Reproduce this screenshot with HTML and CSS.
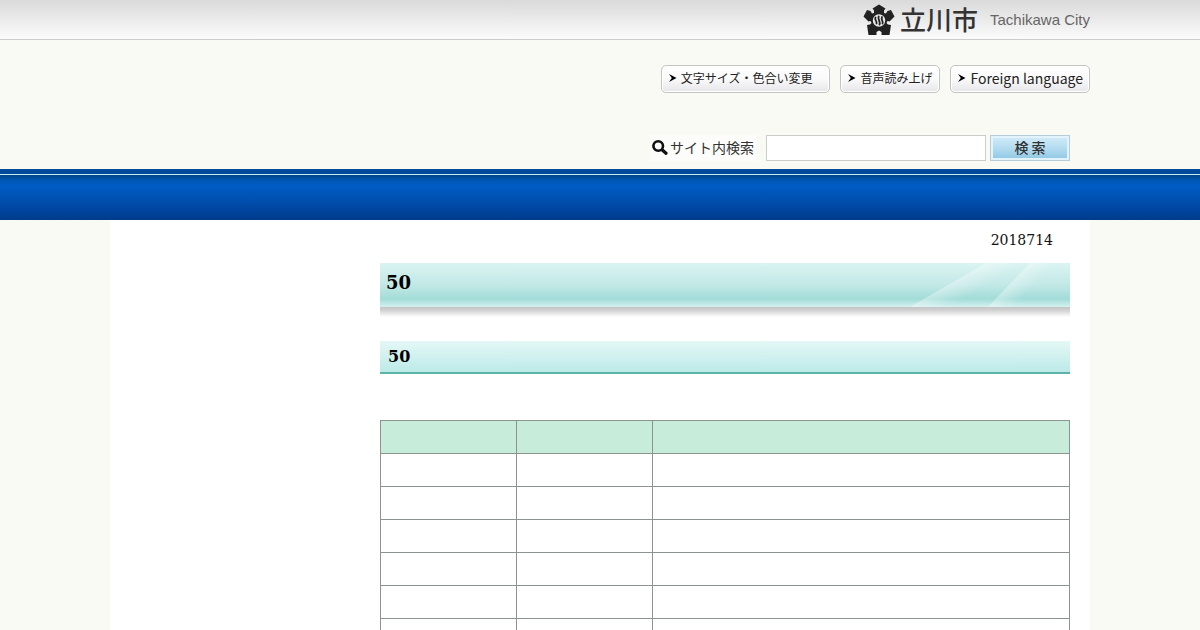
FILE: index.html
```
<!DOCTYPE html>
<html lang="ja">
<head>
    <meta charset="UTF-8">
    <meta name="viewport" content="width=device-width, initial-scale=1.0">
    <title>立川市</title>
    <link rel="stylesheet" href="styles.css">
</head>
<body>
    <header>
        <div class="top-bar">
            <div class="wrap">
                <a class="logo" href="#">
                    <svg class="logo-mark" viewBox="0 0 32 32" aria-hidden="true">
                        <path fill="#222" d="M16 0.5 L22.5 4.5 L21 6.5 L21 9 L23 9.5 L24.5 7 L28 6 L31.5 12.5 L26.5 17.5 L24.5 17 L23.5 19 L25 20.5 L28 21 L26.5 31 L18.5 31 L18.5 28 L16 26.5 L13.5 28 L13.5 31 L5.5 31 L4 21 L7 20.5 L8.5 19 L7.5 17 L5.5 17.5 L0.5 12.5 L4 6 L7.5 7 L9 9.5 L11 9 L11 6.5 L9.5 4.5 Z"/>
                        <circle cx="16" cy="16.5" r="6.2" fill="#e8e8e8"/>
                        <g fill="none" stroke="#222" stroke-width="1.8" stroke-linecap="round">
                            <path d="M12.5 13.5 C11 16 14.5 17 13.5 19.5"/>
                            <path d="M15.7 12.5 C14.2 15.5 18 17.5 16.5 20.5"/>
                            <path d="M19 13 C17.5 16 20.8 17 19.5 19.5"/>
                        </g>
                    </svg>
                    <span class="logo-name">立川市</span>
                    <span class="logo-roman">Tachikawa City</span>
                </a>
            </div>
        </div>
        <div class="wrap">
            <div class="tools">
                <a class="tool tool-view" href="#"><svg class="arrow" viewBox="0 0 8 8" aria-hidden="true"><path d="M0 0 L7.5 4 L0 8 L2.8 4 Z"/></svg>文字サイズ・色合い変更</a>
                <a class="tool" href="#"><svg class="arrow" viewBox="0 0 8 8" aria-hidden="true"><path d="M0 0 L7.5 4 L0 8 L2.8 4 Z"/></svg>音声読み上げ</a>
                <a class="tool tool-lang" href="#"><svg class="arrow" viewBox="0 0 8 8" aria-hidden="true"><path d="M0 0 L7.5 4 L0 8 L2.8 4 Z"/></svg>Foreign language</a>
            </div>
            <form class="search">
                <label for="keyword">
                    <svg class="glass" viewBox="0 0 16 16" aria-hidden="true">
                        <circle cx="6.2" cy="7" r="4.8" fill="none" stroke="#111" stroke-width="2.6"/>
                        <path d="M10.3 11 L14 14.3" stroke="#111" stroke-width="3.2" stroke-linecap="round"/>
                    </svg>
                    サイト内検索
                </label>
                <input type="text" id="keyword">
                <button type="button">検 索</button>
            </form>
        </div>
    </header>
    <nav class="global-nav"></nav>
    <div class="page">
        <main>
            <p class="date">2018714</p>
            <h1>
                <span>50</span>
                <svg class="shine" viewBox="0 0 160 44" aria-hidden="true">
                    <defs>
                        <linearGradient id="ray1" gradientUnits="userSpaceOnUse" x1="38" y1="22" x2="48" y2="39">
                            <stop offset="0" stop-color="#fff" stop-opacity="0.35"/>
                            <stop offset="1" stop-color="#fff" stop-opacity="0"/>
                        </linearGradient>
                        <linearGradient id="ray2" gradientUnits="userSpaceOnUse" x1="99" y1="22" x2="113" y2="35">
                            <stop offset="0" stop-color="#fff" stop-opacity="0.35"/>
                            <stop offset="1" stop-color="#fff" stop-opacity="0"/>
                        </linearGradient>
                    </defs>
                    <path fill="url(#ray1)" d="M0 44 L76 0 L118 0 L42 44 Z"/>
                    <path fill="url(#ray2)" d="M78 44 L120 0 L160 0 L118 44 Z"/>
                </svg>
            </h1>
            <h2>50</h2>
            <table>
                <thead>
                    <tr><th class="narrow"></th><th class="narrow"></th><th></th></tr>
                </thead>
                <tbody>
                    <tr><td></td><td></td><td></td></tr>
                    <tr><td></td><td></td><td></td></tr>
                    <tr><td></td><td></td><td></td></tr>
                    <tr><td></td><td></td><td></td></tr>
                    <tr><td></td><td></td><td></td></tr>
                    <tr><td></td><td></td><td></td></tr>
                </tbody>
            </table>
        </main>
    </div>
</body>
</html>
```
FILE: styles.css
```
* {
    box-sizing: border-box;
}

body {
    margin: 0;
    background-color: #f9faf4;
    color: #111;
    font-family: "DejaVu Serif", serif;
    font-size: 14px;
}

.wrap {
    max-width: 980px;
    margin: 0 auto;
}

.top-bar {
    height: 40px;
    border-bottom: 1px solid #ccc;
    background: linear-gradient(#dadada, #fbfbfb);
}

.logo {
    display: flex;
    justify-content: flex-end;
    align-items: center;
    height: 39px;
    color: #333;
    text-decoration: none;
}

.logo-mark {
    width: 32px;
    height: 32px;
    margin-right: 5px;
}

.logo-name {
    font: 500 26px/36px "Noto Sans CJK JP", sans-serif;
    margin-right: 12px;
    padding-bottom: 2px;
}

.logo-roman {
    font: 15px/38px "Liberation Sans", sans-serif;
    color: #666;
}

.tools {
    display: flex;
    justify-content: flex-end;
    gap: 10px;
    padding-top: 25px;
}

.tool {
    display: flex;
    align-items: center;
    height: 28px;
    padding: 0 7px 2px;
    border: 1px solid #c4c4c4;
    border-radius: 5px;
    background: linear-gradient(#fff, #fafafa 50%, #e6e6ea);
    box-shadow: inset 0 0 0 1px #fff;
    color: #222;
    font: 12px/24px "Noto Sans CJK JP", sans-serif;
    text-decoration: none;
}

.tool-view {
    padding-right: 17px;
}

.tool-lang {
    padding-right: 6px;
    font-size: 14px;
}

.arrow {
    width: 8px;
    height: 8px;
    margin-right: 4px;
}

.search {
    display: flex;
    justify-content: flex-end;
    align-items: center;
    padding: 42px 20px 8px 0;
}

.search label {
    display: flex;
    align-items: center;
    gap: 2px;
    height: 26px;
    margin-right: 10px;
    padding: 0 2px 2px;
    background-color: #fcfcfa;
    color: #333;
    font: 14px/24px "Noto Sans CJK JP", sans-serif;
}

.glass {
    width: 16px;
    height: 16px;
}

.search input {
    width: 220px;
    height: 26px;
    margin-right: 4px;
    border: 1px solid #ccc;
    background-color: #fff;
}

.search button {
    width: 80px;
    height: 26px;
    padding: 0 0 2px;
    border: 1px solid #b4cdd8;
    background: linear-gradient(#d4ecf8, #b4dcf0 50%, #8ec6e4);
    box-shadow: inset 0 0 0 2px #e2f3fb;
    color: #333;
    font: 500 14px/22px "Noto Sans CJK JP", sans-serif;
}

.global-nav {
    height: 51px;
    border-top: 5px solid #004a9c;
    background: linear-gradient(#c4e8f4 1px, #004586 1px, #0058b8 7px, #005cc4 12px, #0050b0 26px, #00429a 38px, #003c8a);
    background-clip: padding-box;
}

.page {
    max-width: 980px;
    margin: 0 auto;
    padding: 10px 20px 20px 270px;
    background-color: #fff;
}

.date {
    margin: 0 17px 13px 0;
    line-height: 20px;
    text-align: right;
}

/* the last 10px are the shadow under the bar */
h1 {
    display: flex;
    justify-content: space-between;
    height: 54px;
    margin: 0 0 24px;
    padding-left: 6px;
    background: linear-gradient(#daf4f2, #c2e8e6 22px, #a2dcd8 36px, #c8ecea 42px, #d4f0ee 44px, #c4c4c6 44px, #d0d0d0 47px, #fff);
    color: #000;
    font-size: 18px;
    line-height: 39px;
}

.shine {
    width: 160px;
    height: 44px;
}

h2 {
    height: 33px;
    margin: 0 0 46px;
    padding-left: 8px;
    border-bottom: 2px solid #5cb4a8;
    background: linear-gradient(#e4f8f6, #bceae8);
    color: #000;
    font-size: 16px;
    line-height: 31px;
}

table {
    width: 100%;
    border-collapse: collapse;
    table-layout: fixed;
}

th, td {
    height: 33px;
    padding: 0;
    border: 1px solid #8c9490;
}

th {
    background-color: #c8ecda;
}

.narrow {
    width: 136px;
}
```
